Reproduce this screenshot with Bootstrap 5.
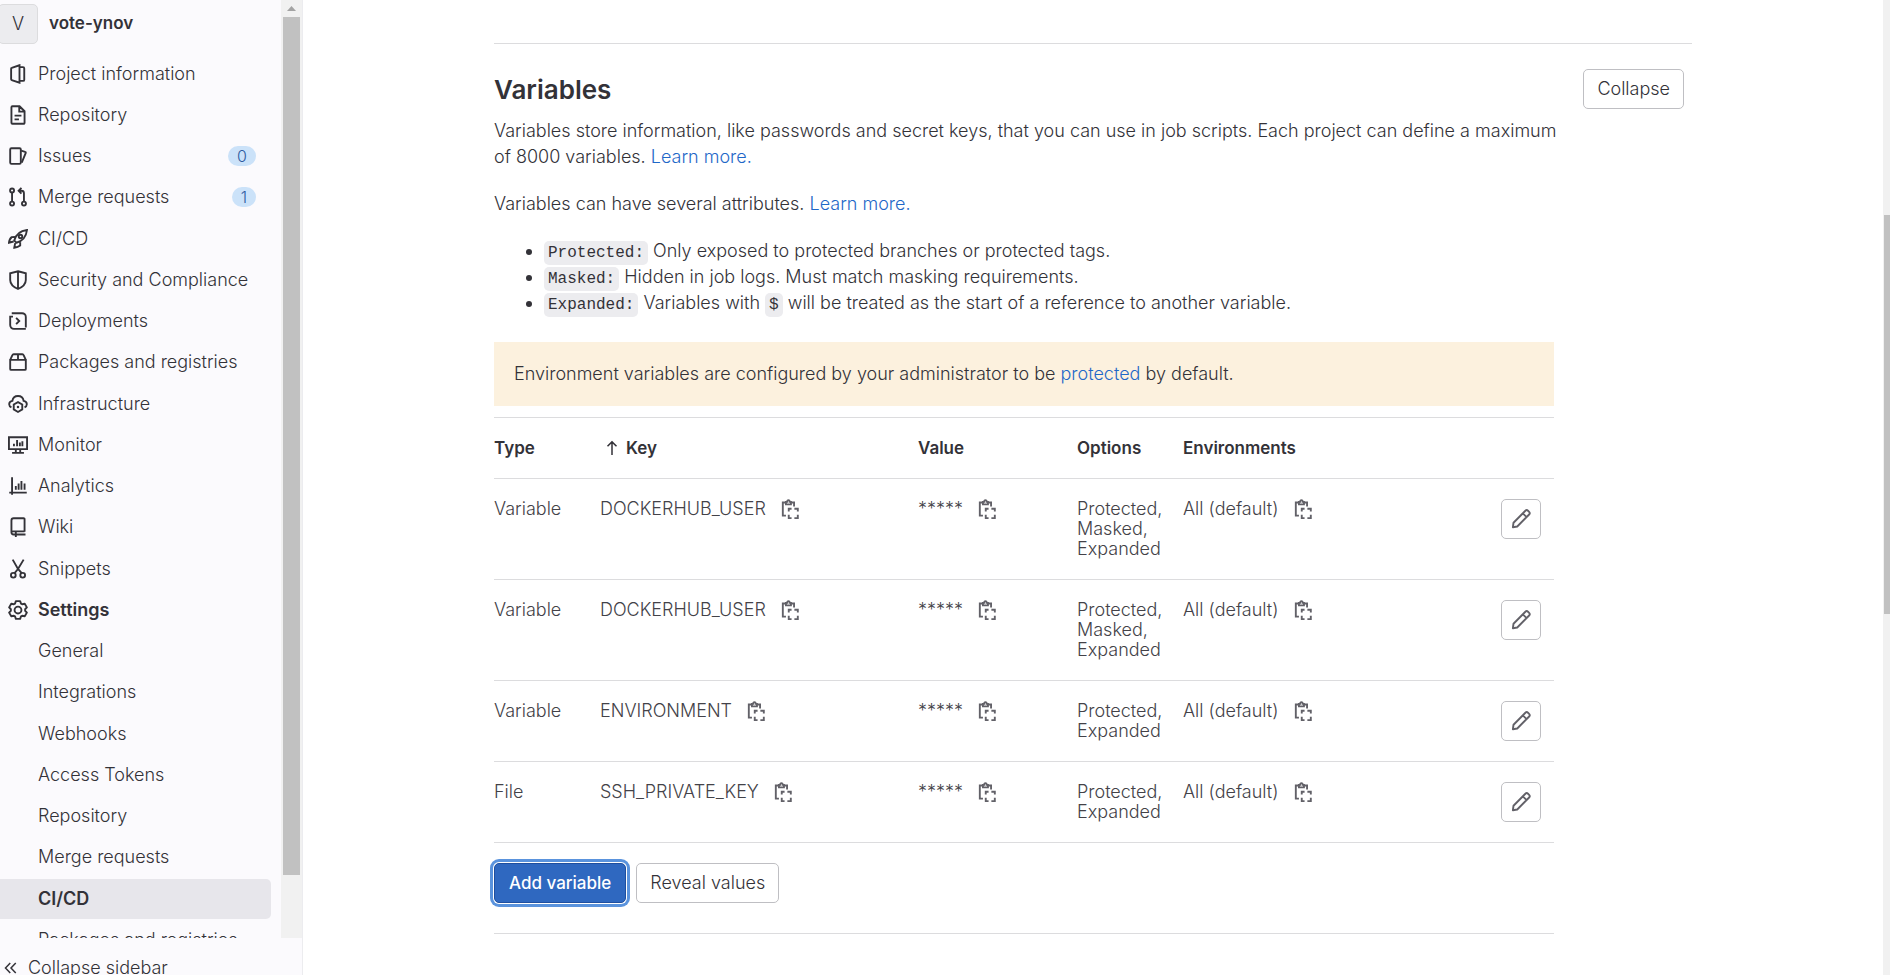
<!DOCTYPE html>
<html lang="en">
<head>
<meta charset="utf-8">
<meta name="viewport" content="width=device-width, initial-scale=1">
<title>CI/CD Settings · vote-ynov</title>
<link rel="stylesheet" href="https://cdn.jsdelivr.net/npm/bootstrap@5.3.0/dist/css/bootstrap.min.css">
<style>
  body { font-family: Inter, "Noto Sans", sans-serif; font-size: 18px; font-weight: 300; line-height: 26px; color: #333238; background: #fff; }
  a { color: #1f68c8; text-decoration: none; }
  svg { fill: none; stroke: currentColor; stroke-width: 1.5; }
  .icon { width: 20px; height: 20px; flex: none; }
  .icon-sm { width: 16px; height: 16px; flex: none; }

  /* Sidebar */
  .side { width: 303px; background: #fbfafd; border-right: 1px solid #ececef; }
  .side a { color: #333238; }
  .side-body { min-height: 0; }
  .context { height: 54px; padding: 4px 0 10px; }
  .avatar { width: 40px; height: 40px; margin-left: -2px; background: #ececef; border: 1px solid #dcdcde; border-radius: 5px; }
  .project-name { padding: 6px 0 0 11px; font-size: 17px; }
  .side-item { height: 40px; margin: 0 10px 1px 0; padding: 0 15px 0 8px; gap: 10px; border-radius: 0 5px 5px 0; }
  li:nth-child(4n) > .side-item { margin-bottom: 2px; }
  .side-item.sub { padding-left: 38px; }
  .side-item.active { background: #e7e6eb; }
  .counter { padding: 0 9px; font-size: 16px; line-height: 20px; border-radius: 10px; background: #cbe2f9; color: #2f5ca0; }
  .side-footer { height: 37px; padding: 17px 0 0 3px; gap: 9px; }
  .side-footer svg { margin-top: 5px; }
  .scroll-track { width: 21px; background: #f1f1f1; padding: 0 2px; }
  .scroll-arrow { height: 17px; }
  .scroll-thumb { background: #c1c1c1; height: 91.5%; }
  .page-track { width: 7px; background: #f1f1f1; }
  .page-thumb { top: 22%; left: 1px; right: 0; height: 41%; background: #c1c1c1; }

  /* Page */
  .page { max-width: 1198px; }
  .rule { border-top: 1px solid #dcdcde; }
  .section-top { margin-top: 43px; }
  .head { padding: 25px 8px 0 0; }
  .title { padding-top: 5px; font-size: 26px; line-height: 32px; font-weight: 600; }
  .intro { max-width: 1076px; margin-bottom: 21px; }
  .head + .intro { margin-top: 9px; }
  .content { max-width: 1060px; }
  .attrs { padding-left: 50px; margin-bottom: 26px; }
  .attrs code { font-family: "Liberation Mono", "DejaVu Sans Mono", monospace; font-size: 16px; line-height: 20px; font-weight: 400; color: #333238; background: #ececef; border-radius: 5px; padding: 3px 4px; }
  .notice { background: #fcf1de; padding: 19px 20px; }

  .btn { --bs-btn-font-size: 18px; --bs-btn-font-weight: 300; --bs-btn-line-height: 20px; --bs-btn-padding-x: 14px; --bs-btn-padding-y: 9px; --bs-btn-border-radius: 5px; }
  .btn-plain { --bs-btn-padding-x: 13px; --bs-btn-color: #333238; --bs-btn-bg: #fff; --bs-btn-border-color: #bfbfc3; --bs-btn-hover-bg: #ececef; }
  .btn-edit { --bs-btn-padding-x: 9px; --bs-btn-color: #626168; }
  .btn-add { --bs-btn-font-weight: 500; --bs-btn-font-size: 17px; --bs-btn-color: #fff; --bs-btn-bg: #2f68c0; --bs-btn-border-color: #1f4f9f; --bs-btn-hover-bg: #2f5ca0; --bs-btn-hover-color: #fff; box-shadow: 0 0 0 1px #fff, 0 0 0 4px #5a93dd; }

  .vars { table-layout: fixed; margin-top: 11px; color: #434248; border-top: 1px solid #dcdcde; }
  .vars th, .vars td { padding: 20px 20px 20px 0; line-height: 20px; vertical-align: top; border-bottom: 1px solid #dcdcde; }
  .vars th { color: #333238; font-size: 17px; font-weight: 600; }
  .vars .opts { padding-right: 15px; }
  .vars .act { padding-right: 13px; text-align: right; }
  .sort { gap: 6px; padding-left: 4px; }
  .copy { color: #626168; background: none; border: 0; padding: 0; margin-left: 14px; width: 20px; height: 20px; }
  .copy svg, .btn-edit svg { display: block; }
  .actions { padding: 20px 0 30px; gap: 10px; }
</style>
</head>
<body>
<svg width="0" height="0" class="position-absolute" aria-hidden="true">
  <symbol id="i-project" viewBox="0 0 16 16"><path d="M9.2 1 3 3.100a.7.7 0 0 0-.5.7v8.400c0 .3.200.6.500.7L9.200 15zM9.200 2.500h2.800a1 1 0 0 1 1 1v9a1 1 0 0 1-1 1H9.200"/></symbol>
  <symbol id="i-doc" viewBox="0 0 16 16"><path d="M9.250 1H3.500a.75.75 0 0 0-.75.75v12.500c0 .4.350.75.75.75h9a.75.75 0 0 0 .75-.75V5zM9 1v4.250h4M5.250 8.500h5.500M5.250 11.500h3.500"/></symbol>
  <symbol id="i-issues" viewBox="0 0 16 16"><rect x="1.750" y="1.750" width="8.500" height="12.500" rx="1"/><path d="m10.500 3.750 3.200.9c.4.100.6.500.5.900L11 13.250"/></symbol>
  <symbol id="i-merge" viewBox="0 0 16 16"><circle cx="3.250" cy="2.750" r="1.600"/><circle cx="3.250" cy="13.250" r="1.600"/><circle cx="12.750" cy="13.250" r="1.600"/><path d="M3.250 4.500v7M12.750 11.500V5a2 2 0 0 0-2-2H8.500M10.750.75 8.500 3l2.250 2.250"/></symbol>
  <symbol id="i-rocket" viewBox="0 0 16 16"><path d="M5 9.250C6.250 4.500 9.500 1.500 15.200.8 14.500 6.500 11.500 9.750 6.750 11zM5.500 6.250 3 6.500C1.500 7.500 1 9 .75 11l3.750-1M9.750 10.500v2.750c-1.250 1-2.750 1.500-4.750 1.750l.75-3.750"/><circle cx="10" cy="6" r="1.400"/></symbol>
  <symbol id="i-shield" viewBox="0 0 16 16"><path d="M8 1 14.250 2.600V8c0 3.600-2.900 5.750-6.250 7.200C4.650 13.750 1.750 11.600 1.750 8V2.600zM8 1v14"/></symbol>
  <symbol id="i-deploy" viewBox="0 0 16 16"><path d="M3 1.750h8.250a3 3 0 0 1 3 3v8.500M13 14.250H4.750a3 3 0 0 1-3-3V5.250M1.750 8V4.500H4M14.250 14.250h-2M6.500 5.500 9 8l-2.500 2.500"/></symbol>
  <symbol id="i-package" viewBox="0 0 16 16"><path d="M1.750 6.250h12.500v7.250a.75.75 0 0 1-.75.75h-11a.75.75 0 0 1-.75-.75zM1.750 6.250 3.500 2.500c.2-.5.5-.75 1-.75h7c.5 0 .8.250 1 .75l1.750 3.750M8 1.750v4.500"/></symbol>
  <symbol id="i-cloud" viewBox="0 0 16 16"><path d="M2.750 10.750C.2 9.500.3 6 3.500 5.500 4.250.3 11.750.3 12.500 5.500c3.200.5 3.300 4 .75 5.250"/><path d="m8 6.500 3.400 1.900v3.900L8 14.400l-3.400-2.100V8.400z"/><circle cx="8" cy="10.400" r="1" fill="currentColor" stroke="none"/></symbol>
  <symbol id="i-monitor" viewBox="0 0 16 16"><path d="M.75 1.750h14.500v9.500H.75zM3.250 14.250h9.500M6.250 11.500v2.500M9.750 11.500v2.500M4.750 7v2M7.250 4v5M9.500 6v3M11.500 5v4" /></symbol>
  <symbol id="i-chart" viewBox="0 0 16 16"><path d="M3.250 1v14M1 13.250h14M6.250 8v3M8.500 6v5M10.750 4v7M13.250 6v5"/></symbol>
  <symbol id="i-book" viewBox="0 0 16 16"><path d="M13.250 11.750V1.750a.75.75 0 0 0-.75-.75h-8A1.750 1.750 0 0 0 2.750 2.750v9.500a1.750 1.750 0 0 0 1.750 1.750H14M2.750 12.250c0-.5.500-.75 1.250-.75h9.250M6.250 11.500V16"/></symbol>
  <symbol id="i-scissors" viewBox="0 0 16 16"><circle cx="4.250" cy="13" r="1.900"/><circle cx="11.750" cy="13" r="1.900"/><path d="M3.750.5 8 8l3 3.250M12.500.5 8 8l-2.750 3.250"/></symbol>
  <symbol id="i-gear" viewBox="0 0 16 16"><path d="M6.300.9h3.400l.7 2 .9.500 2.100-.4 1.700 2.900L13.700 7.400v1.200l1.400 1.500-1.700 2.900-2.100-.4-.9.500-.7 2H6.300l-.7-2-.9-.5-2.100.4L.9 10.100l1.400-1.500V7.400L.9 5.900 2.600 3l2.100.4.9-.5z" stroke-linejoin="round"/><circle cx="8" cy="8" r="2.750"/></symbol>
  <symbol id="i-chevrons" viewBox="0 0 16 16"><path d="M7.250 3 2.500 8l4.750 5M12.750 3 8 8l4.750 5"/></symbol>
  <symbol id="i-up" viewBox="0 0 16 16"><path d="M8 15V2M3.500 6.250 8 1.900l4.500 4.350"/></symbol>
  <symbol id="i-paste" viewBox="0 0 16 16"><path d="M4.500 2.750H2.250v10.500h2.500M9 2.750h2.250V6M4.750 4.250v-2h1C5.750.4 7.750.4 7.750 2.250h1v2z"/><path d="M7 10V7.750h2.250M11.500 7.750h2.750V10M14.250 12.500v2.750H11.500M9.250 15.250H7V12.500"/></symbol>
  <symbol id="i-pencil" viewBox="0 0 16 16"><path d="m10.900 2 .6-.6a1.500 1.500 0 0 1 2.100 0l.9.900a1.500 1.500 0 0 1 0 2.100L5 14l-3.500.6.500-3.600zM9.500 3.500l3 3" stroke-linejoin="round"/></symbol>
</svg>

<div class="d-flex">
  <nav class="side vh-100 d-flex flex-column flex-shrink-0 sticky-top overflow-hidden" aria-label="Project navigation">
    <div class="side-body d-flex flex-grow-1 overflow-hidden">
      <div class="flex-grow-1">
        <div class="context d-flex">
          <a href="#" class="avatar d-flex align-items-center justify-content-center">V</a>
          <a href="#" class="project-name fw-semibold">vote-ynov</a>
        </div>
        <ul class="list-unstyled mb-0">
          <li><a href="#" class="side-item d-flex align-items-center"><svg class="icon"><use href="#i-project"/></svg>Project information</a></li>
          <li><a href="#" class="side-item d-flex align-items-center"><svg class="icon"><use href="#i-doc"/></svg>Repository</a></li>
          <li><a href="#" class="side-item d-flex align-items-center"><svg class="icon"><use href="#i-issues"/></svg>Issues<span class="counter ms-auto">0</span></a></li>
          <li><a href="#" class="side-item d-flex align-items-center"><svg class="icon"><use href="#i-merge"/></svg>Merge requests<span class="counter ms-auto">1</span></a></li>
          <li><a href="#" class="side-item d-flex align-items-center"><svg class="icon"><use href="#i-rocket"/></svg>CI/CD</a></li>
          <li><a href="#" class="side-item d-flex align-items-center"><svg class="icon"><use href="#i-shield"/></svg>Security and Compliance</a></li>
          <li><a href="#" class="side-item d-flex align-items-center"><svg class="icon"><use href="#i-deploy"/></svg>Deployments</a></li>
          <li><a href="#" class="side-item d-flex align-items-center"><svg class="icon"><use href="#i-package"/></svg>Packages and registries</a></li>
          <li><a href="#" class="side-item d-flex align-items-center"><svg class="icon"><use href="#i-cloud"/></svg>Infrastructure</a></li>
          <li><a href="#" class="side-item d-flex align-items-center"><svg class="icon"><use href="#i-monitor"/></svg>Monitor</a></li>
          <li><a href="#" class="side-item d-flex align-items-center"><svg class="icon"><use href="#i-chart"/></svg>Analytics</a></li>
          <li><a href="#" class="side-item d-flex align-items-center"><svg class="icon"><use href="#i-book"/></svg>Wiki</a></li>
          <li><a href="#" class="side-item d-flex align-items-center"><svg class="icon"><use href="#i-scissors"/></svg>Snippets</a></li>
          <li><a href="#" class="side-item d-flex align-items-center fw-semibold"><svg class="icon"><use href="#i-gear"/></svg>Settings</a></li>
          <li><a href="#" class="side-item sub d-flex align-items-center">General</a></li>
          <li><a href="#" class="side-item sub d-flex align-items-center">Integrations</a></li>
          <li><a href="#" class="side-item sub d-flex align-items-center">Webhooks</a></li>
          <li><a href="#" class="side-item sub d-flex align-items-center">Access Tokens</a></li>
          <li><a href="#" class="side-item sub d-flex align-items-center">Repository</a></li>
          <li><a href="#" class="side-item sub d-flex align-items-center">Merge requests</a></li>
          <li><a href="#" class="side-item sub active fw-semibold d-flex align-items-center" aria-current="page">CI/CD</a></li>
          <li><a href="#" class="side-item sub d-flex align-items-center">Packages and registries</a></li>
        </ul>
      </div>
      <div class="scroll-track flex-shrink-0" aria-hidden="true">
        <div class="scroll-arrow d-flex align-items-center justify-content-center"><svg width="9" height="5" viewBox="0 0 9 5"><path d="M0 5 4.500 0 9 5z" fill="#a3a3a3" stroke="none"/></svg></div>
        <div class="scroll-thumb"></div>
      </div>
    </div>
    <a href="#" class="side-footer d-flex align-items-start flex-shrink-0 text-nowrap"><svg class="icon-sm"><use href="#i-chevrons"/></svg>Collapse sidebar</a>
  </nav>

  <main class="flex-grow-1">
    <div class="page mx-auto">
      <div class="rule section-top"></div>
      <section>
        <div class="head d-flex align-items-start justify-content-between">
          <h2 class="title mb-0">Variables</h2>
          <button type="button" class="btn btn-plain">Collapse</button>
        </div>
        <p class="intro">Variables store information, like passwords and secret keys, that you can use in job scripts. Each project can define a maximum of 8000 variables. <a href="#">Learn more.</a></p>
        <p class="intro">Variables can have several attributes. <a href="#">Learn more.</a></p>
        <div class="content">
          <ul class="attrs">
            <li><code>Protected:</code> Only exposed to protected branches or protected tags.</li>
            <li><code>Masked:</code> Hidden in job logs. Must match masking requirements.</li>
            <li><code>Expanded:</code> Variables with <code>$</code> will be treated as the start of a reference to another variable.</li>
          </ul>
          <div class="notice">Environment variables are configured by your administrator to be <a href="#">protected</a> by default.</div>
          <table class="vars w-100">
            <colgroup><col style="width:10%"><col style="width:30%"><col style="width:15%"><col style="width:10%"><col style="width:25%"><col style="width:10%"></colgroup>
            <thead>
              <tr><th>Type</th><th><span class="sort d-flex align-items-center"><svg class="icon-sm"><use href="#i-up"/></svg>Key</span></th><th>Value</th><th class="opts">Options</th><th>Environments</th><th></th></tr>
            </thead>
            <tbody>
              <tr><td>Variable</td><td><span class="d-flex">DOCKERHUB_USER<button type="button" class="copy" aria-label="Copy key"><svg class="icon"><use href="#i-paste"/></svg></button></span></td><td><span class="d-flex">*****<button type="button" class="copy" aria-label="Copy value"><svg class="icon"><use href="#i-paste"/></svg></button></span></td><td class="opts">Protected, Masked, Expanded</td><td><span class="d-flex">All (default)<button type="button" class="copy" aria-label="Copy environment"><svg class="icon"><use href="#i-paste"/></svg></button></span></td><td class="act"><button type="button" class="btn btn-plain btn-edit" aria-label="Edit"><svg class="icon"><use href="#i-pencil"/></svg></button></td></tr>
              <tr><td>Variable</td><td><span class="d-flex">DOCKERHUB_USER<button type="button" class="copy" aria-label="Copy key"><svg class="icon"><use href="#i-paste"/></svg></button></span></td><td><span class="d-flex">*****<button type="button" class="copy" aria-label="Copy value"><svg class="icon"><use href="#i-paste"/></svg></button></span></td><td class="opts">Protected, Masked, Expanded</td><td><span class="d-flex">All (default)<button type="button" class="copy" aria-label="Copy environment"><svg class="icon"><use href="#i-paste"/></svg></button></span></td><td class="act"><button type="button" class="btn btn-plain btn-edit" aria-label="Edit"><svg class="icon"><use href="#i-pencil"/></svg></button></td></tr>
              <tr><td>Variable</td><td><span class="d-flex">ENVIRONMENT<button type="button" class="copy" aria-label="Copy key"><svg class="icon"><use href="#i-paste"/></svg></button></span></td><td><span class="d-flex">*****<button type="button" class="copy" aria-label="Copy value"><svg class="icon"><use href="#i-paste"/></svg></button></span></td><td class="opts">Protected, Expanded</td><td><span class="d-flex">All (default)<button type="button" class="copy" aria-label="Copy environment"><svg class="icon"><use href="#i-paste"/></svg></button></span></td><td class="act"><button type="button" class="btn btn-plain btn-edit" aria-label="Edit"><svg class="icon"><use href="#i-pencil"/></svg></button></td></tr>
              <tr><td>File</td><td><span class="d-flex">SSH_PRIVATE_KEY<button type="button" class="copy" aria-label="Copy key"><svg class="icon"><use href="#i-paste"/></svg></button></span></td><td><span class="d-flex">*****<button type="button" class="copy" aria-label="Copy value"><svg class="icon"><use href="#i-paste"/></svg></button></span></td><td class="opts">Protected, Expanded</td><td><span class="d-flex">All (default)<button type="button" class="copy" aria-label="Copy environment"><svg class="icon"><use href="#i-paste"/></svg></button></span></td><td class="act"><button type="button" class="btn btn-plain btn-edit" aria-label="Edit"><svg class="icon"><use href="#i-pencil"/></svg></button></td></tr>
            </tbody>
          </table>
          <div class="actions d-flex">
            <button type="button" class="btn btn-add">Add variable</button>
            <button type="button" class="btn btn-plain">Reveal values</button>
          </div>
          <div class="rule"></div>
        </div>
      </section>
    </div>
  </main>
  <div class="page-track vh-100 sticky-top flex-shrink-0" aria-hidden="true"><div class="page-thumb position-absolute"></div></div>
</div>
<script src="https://cdn.jsdelivr.net/npm/bootstrap@5.3.0/dist/js/bootstrap.bundle.min.js"></script>
</body>
</html>
